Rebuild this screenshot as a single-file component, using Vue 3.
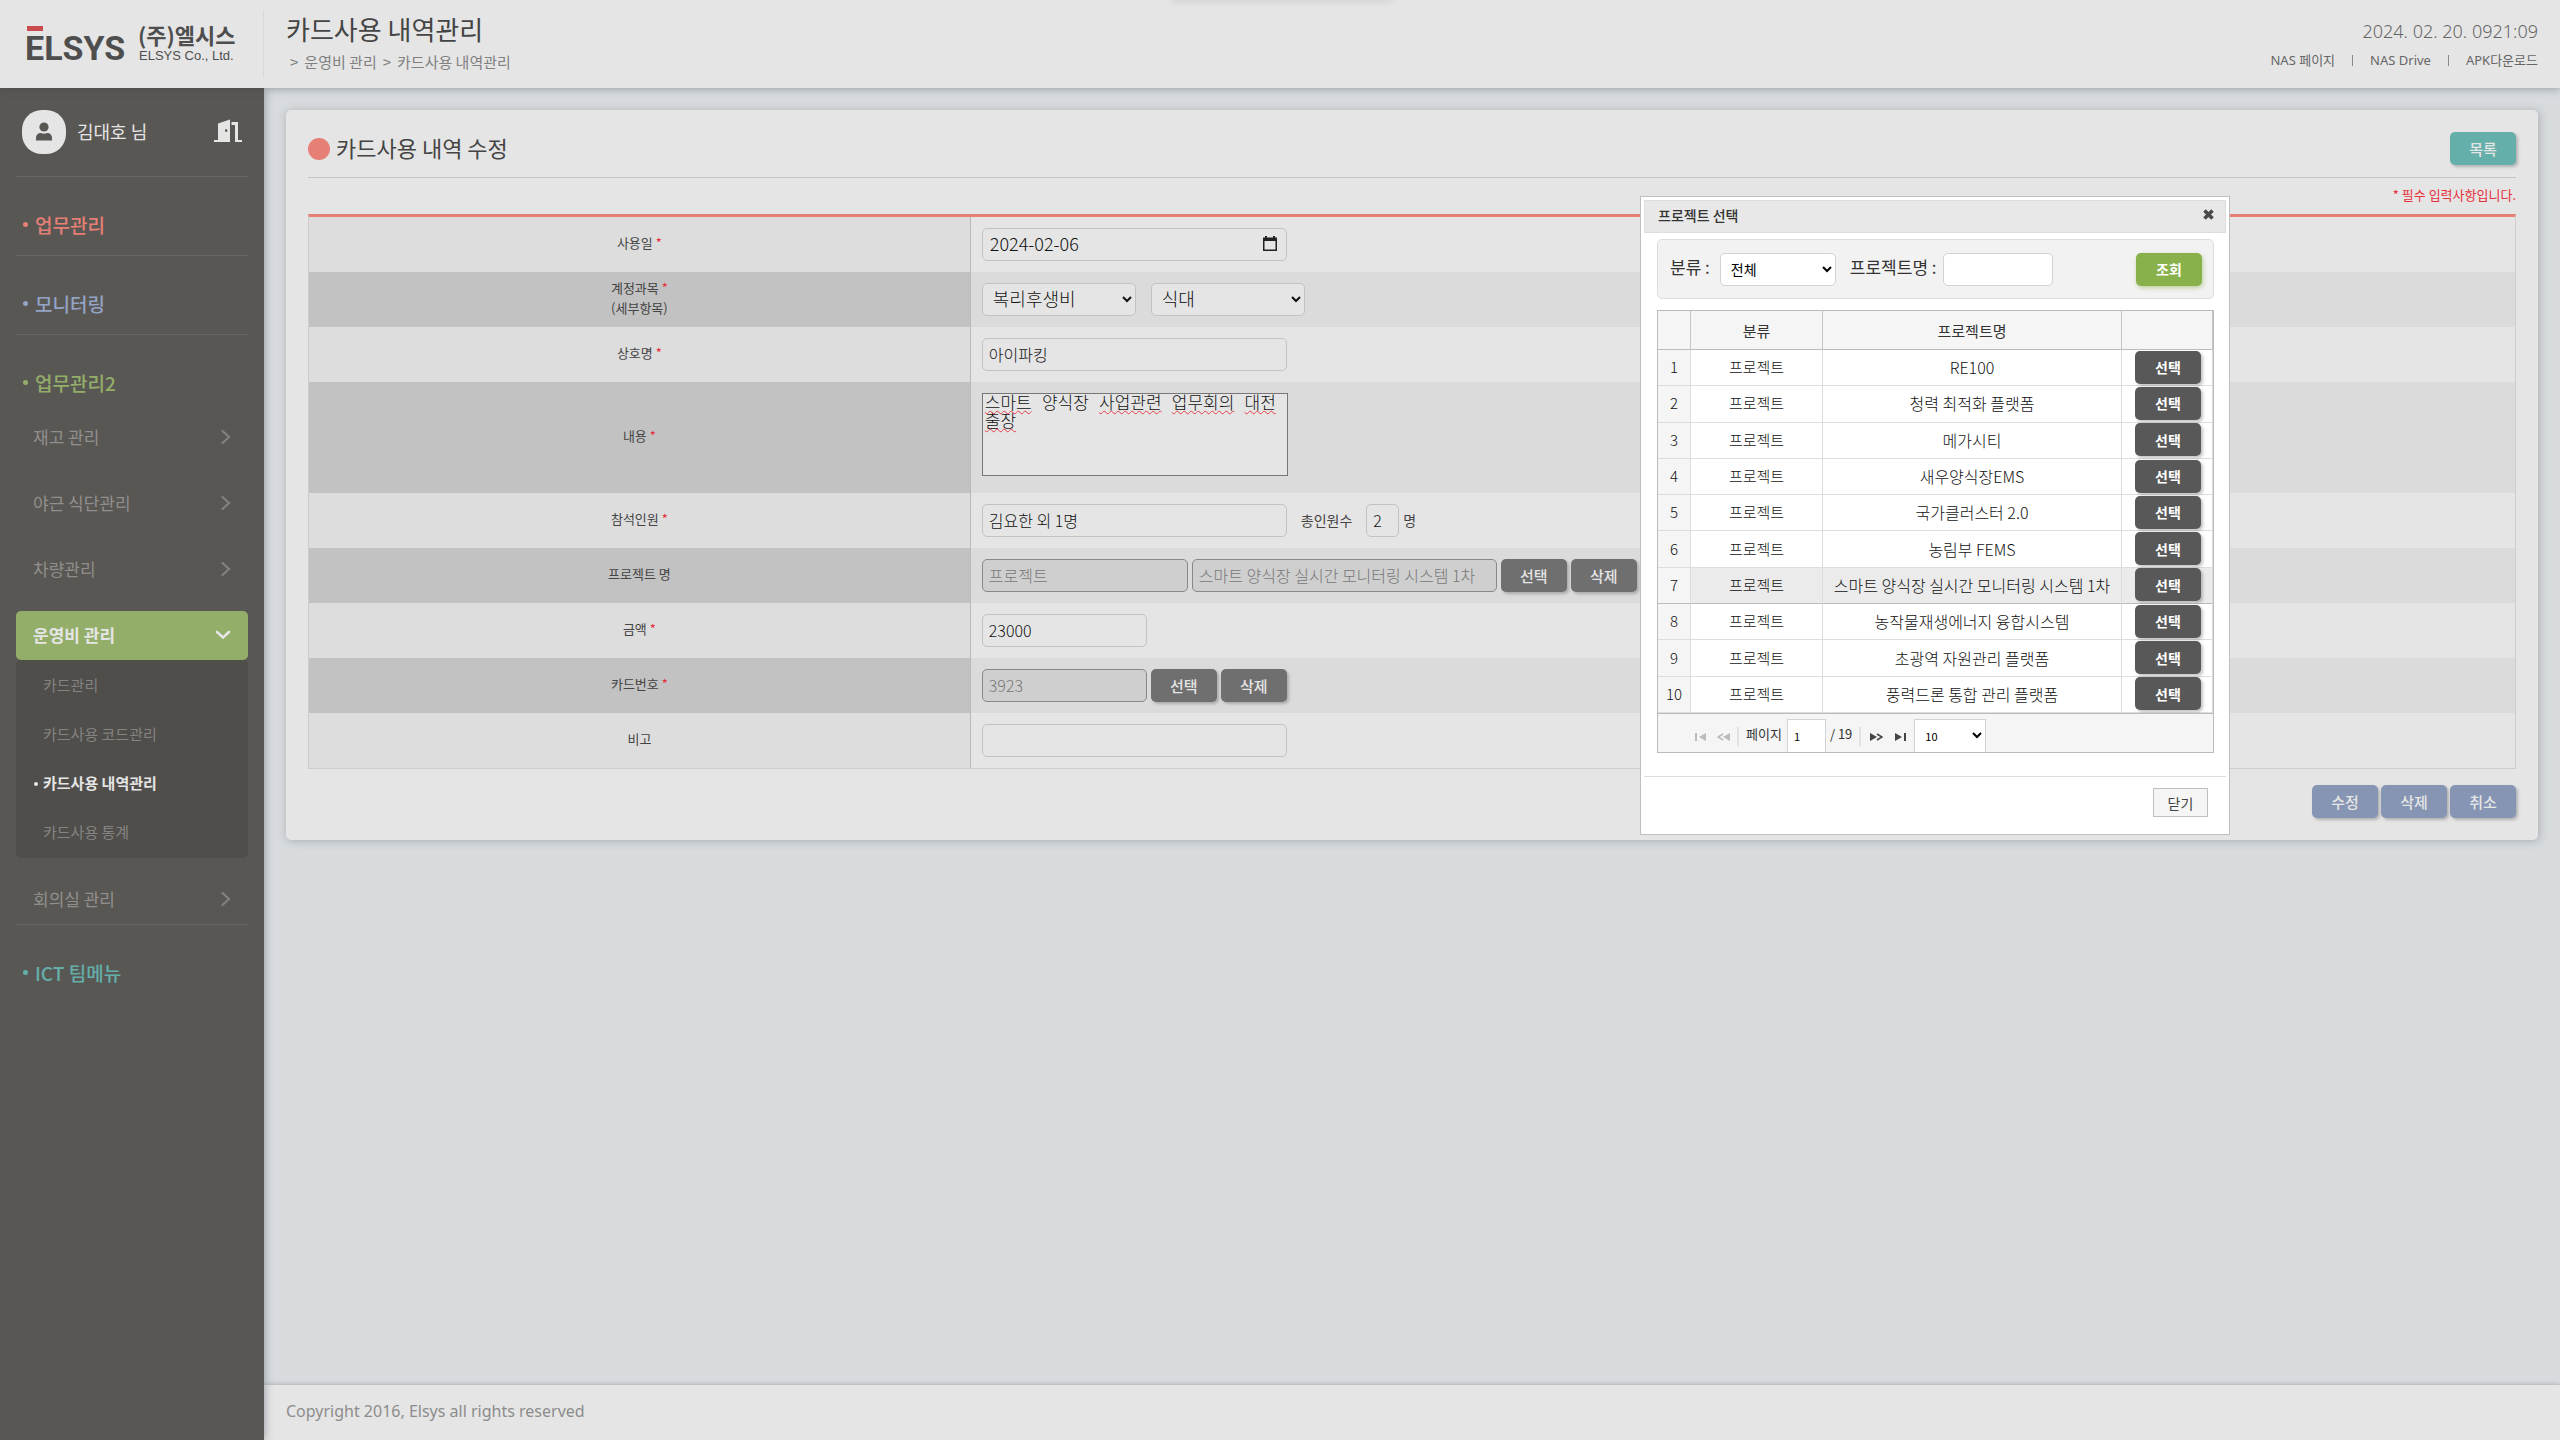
<script setup>
import { ref } from 'vue'

const menu = [
  { label: '재고 관리' },
  { label: '야근 식단관리' },
  { label: '차량관리' },
  { label: '운영비 관리', open: true, children: ['카드관리', '카드사용 코드관리', '카드사용 내역관리', '카드사용 통계'] },
  { label: '회의실 관리' },
]
const currentPage = '카드사용 내역관리'

const memo = ref('스마트 양식장 사업관련 업무회의 대전 출장')
const misspelled = ['스마트', '사업관련', '업무회의', '대전', '출장']

const projects = [
  'RE100',
  '청력 최적화 플랫폼',
  '메가시티',
  '새우양식장EMS',
  '국가클러스터 2.0',
  '농림부 FEMS',
  '스마트 양식장 실시간 모니터링 시스템 1차',
  '농작물재생에너지 융합시스템',
  '초광역 자원관리 플랫폼',
  '풍력드론 통합 관리 플랫폼',
]
const selectedRow = 6
</script>

<template>
  <div class="page">
    <header class="top">
      <div class="brand">
        <svg class="logo" viewBox="0 0 220 44" role="img" aria-label="ELSYS (주)엘시스">
          <rect x="0" y="4" width="16" height="5" fill="#cb4a4e" />
          <text class="logo-name" x="-2" y="38">ELSYS</text>
          <text class="logo-ko" x="111" y="22">(주)엘시스</text>
          <text class="logo-en" x="112" y="38">ELSYS Co., Ltd.</text>
        </svg>
      </div>
      <div class="heading">
        <h1>카드사용 내역관리</h1>
        <nav class="crumbs"><span>&gt;</span><a href="#">운영비 관리</a><span>&gt;</span><a href="#">카드사용 내역관리</a></nav>
      </div>
      <div class="tools">
        <time>2024. 02. 20. 0921:09</time>
        <nav><a href="#">NAS 페이지</a><i></i><a href="#">NAS Drive</a><i></i><a href="#">APK다운로드</a></nav>
      </div>
      <div class="tab-hint"></div>
    </header>

    <div class="body">
      <aside class="side">
        <div class="user">
          <span class="avatar">
            <svg width="18" height="20" viewBox="0 0 18 20"><circle cx="9" cy="5" r="4.6" fill="#595754" /><path d="M1 18.500V16c0-3 2-5 5-5 1 .6 2 .8 3 .8s2-.2 3-.8c3 0 5 2 5 5v2.500z" fill="#595754" /></svg>
          </span>
          <span class="name">김대호 님</span>
          <button class="logout" aria-label="로그아웃">
            <svg width="28" height="24" viewBox="0 0 28 24" fill="#e5e5e5"><path fill-rule="evenodd" d="M0 21h4V4.500L16 .5V23H0zM11 11.500a1.200 1.600 0 1 0 2.400 0 1.200 1.600 0 1 0-2.400 0z" /><path d="M17.500 3H24v18h4v2h-7V6h-3.500z" /></svg>
          </button>
        </div>
        <div class="group red"><h2>업무관리</h2></div>
        <div class="group blue"><h2>모니터링</h2></div>
        <div class="group green">
          <h2>업무관리2</h2>
          <ul class="items">
            <li v-for="m in menu" :key="m.label">
              <a href="#" class="item" :class="{ active: m.open }">
                <span>{{ m.label }}</span>
                <svg v-if="m.open" width="16" height="10" viewBox="0 0 16 10"><path d="M2 2l6 5.500L14 2" fill="none" stroke="#e5e5e5" stroke-width="2.600" stroke-linecap="round" /></svg>
                <svg v-else width="10" height="16" viewBox="0 0 10 16"><path d="M1.500 2L8 8l-6.500 6" fill="none" stroke="#83817f" stroke-width="2.200" stroke-linecap="round" /></svg>
              </a>
              <ul v-if="m.children" class="sub">
                <li v-for="c in m.children" :key="c"><a href="#" :class="{ on: c === currentPage }">{{ c }}</a></li>
              </ul>
            </li>
          </ul>
        </div>
        <div class="group teal last"><h2>ICT 팀메뉴</h2></div>
      </aside>

      <div class="content">
        <main>
          <section class="card">
            <div class="card-head">
              <h2>카드사용 내역 수정</h2>
              <button class="btn teal">목록</button>
            </div>
            <p class="required">* 필수 입력사항입니다.</p>
            <table class="form">
              <colgroup><col class="c-label" /><col /></colgroup>
              <tbody>
                <tr>
                  <th scope="row"><label for="f-date">사용일<em>*</em></label></th>
                  <td><div class="fields"><div class="date">
                    <input id="f-date" class="w-full" value="2024-02-06" />
                    <button aria-label="달력"><svg width="14" height="16" viewBox="0 0 14 16"><path fill="#222" fill-rule="evenodd" d="M2 0h2v1.500h6V0h2v1.500h2V15H0V1.500h2zM1.500 5v8.500h11V5z" /></svg></button>
                  </div></div></td>
                </tr>
                <tr>
                  <th scope="row"><label for="f-acct">계정과목<em>*</em><br />(세부항목)</label></th>
                  <td><div class="fields">
                    <select id="f-acct"><option>복리후생비</option></select>
                    <select class="second" aria-label="세부항목"><option>식대</option></select>
                  </div></td>
                </tr>
                <tr>
                  <th scope="row"><label for="f-shop">상호명<em>*</em></label></th>
                  <td><div class="fields"><input id="f-shop" class="w-long" value="아이파킹" /></div></td>
                </tr>
                <tr>
                  <th scope="row"><label for="f-memo">내용<em>*</em></label></th>
                  <td><div class="memo">
                    <textarea id="f-memo" v-model="memo" spellcheck="false"></textarea>
                    <div class="squiggles" aria-hidden="true"><template v-for="(w, i) in memo.split(' ')" :key="i"><span :class="{ bad: misspelled.includes(w) }">{{ w }}</span>{{ ' ' }}</template></div>
                  </div></td>
                </tr>
                <tr>
                  <th scope="row"><label for="f-people">참석인원<em>*</em></label></th>
                  <td><div class="fields">
                    <input id="f-people" class="w-long" value="김요한 외 1명" />
                    <label class="count-label" for="f-count">총인원수</label>
                    <input id="f-count" class="w-count" value="2" />
                    <span class="unit">명</span>
                  </div></td>
                </tr>
                <tr>
                  <th scope="row"><label for="f-kind">프로젝트 명</label></th>
                  <td><div class="fields">
                    <input id="f-kind" class="w-mid" value="프로젝트" disabled />
                    <input class="w-long" aria-label="프로젝트 이름" value="스마트 양식장 실시간 모니터링 시스템 1차" disabled />
                    <button class="btn gray">선택</button><button class="btn gray">삭제</button>
                  </div></td>
                </tr>
                <tr>
                  <th scope="row"><label for="f-sum">금액<em>*</em></label></th>
                  <td><div class="fields"><input id="f-sum" class="w-short" value="23000" /></div></td>
                </tr>
                <tr>
                  <th scope="row"><label for="f-card">카드번호<em>*</em></label></th>
                  <td><div class="fields">
                    <input id="f-card" class="w-short" value="3923" disabled />
                    <button class="btn gray">선택</button><button class="btn gray">삭제</button>
                  </div></td>
                </tr>
                <tr>
                  <th scope="row"><label for="f-note">비고</label></th>
                  <td><div class="fields"><input id="f-note" class="w-long" value="" /></div></td>
                </tr>
              </tbody>
            </table>
            <div class="actions">
              <button class="btn blue">수정</button><button class="btn blue">삭제</button><button class="btn blue">취소</button>
            </div>
          </section>
        </main>
        <footer>Copyright 2016, Elsys all rights reserved</footer>
      </div>
    </div>

    <div class="dialog" role="dialog" aria-labelledby="dlg-title">
      <div class="dlg-bar">
        <h3 id="dlg-title">프로젝트 선택</h3>
        <button aria-label="닫기"><svg width="11" height="11" viewBox="0 0 11 11"><path d="M1.500 1.500l8 8M9.500 1.500l-8 8" stroke="#4a4a4a" stroke-width="3.600" /></svg></button>
      </div>
      <div class="dlg-body">
        <div class="search">
          <label for="s-kind">분류 :</label>
          <select id="s-kind"><option>전체</option></select>
          <label for="s-name">프로젝트명 :</label>
          <input id="s-name" value="" />
          <button class="btn lime">조회</button>
        </div>
        <div class="grid">
          <table>
            <colgroup><col class="g-no" /><col class="g-kind" /><col /><col class="g-act" /></colgroup>
            <thead><tr><th></th><th>분류</th><th>프로젝트명</th><th></th></tr></thead>
            <tbody>
              <tr v-for="(p, i) in projects" :key="p" :class="{ hover: i === selectedRow }">
                <td class="no">{{ i + 1 }}</td>
                <td>프로젝트</td>
                <td class="title">{{ p }}</td>
                <td class="act"><button class="btn dark">선택</button></td>
              </tr>
            </tbody>
          </table>
          <div class="pager">
            <button class="dim first" aria-label="처음"><svg width="11" height="8" viewBox="0 0 11 8"><path d="M0 0h2v8H0zM11 0v8L4 4z" fill="currentColor" /></svg></button>
            <button class="dim prev" aria-label="이전"><svg width="13" height="8" viewBox="0 0 13 8"><path d="M13 0v8L6 4z" fill="currentColor" /><path d="M6 1L1 4l5 3" fill="none" stroke="currentColor" stroke-width="1.500" /></svg></button>
            <i></i>
            <label for="p-no">페이지</label>
            <input id="p-no" value="1" />
            <span>/ 19</span>
            <i></i>
            <button class="next" aria-label="다음"><svg width="13" height="8" viewBox="0 0 13 8"><path d="M0 0v8l7-4z" fill="currentColor" /><path d="M7 1l5 3-5 3" fill="none" stroke="currentColor" stroke-width="1.500" /></svg></button>
            <button class="end" aria-label="마지막"><svg width="11" height="8" viewBox="0 0 11 8"><path d="M9 0h2v8H9zM0 0v8l7-4z" fill="currentColor" /></svg></button>
            <select aria-label="페이지 크기"><option>10</option></select>
          </div>
        </div>
      </div>
      <div class="dlg-foot"><button>닫기</button></div>
    </div>
  </div>
</template>

<style>
body {
  background: #d7dbde;
}
</style>

<style scoped>
* {
  box-sizing: border-box;
}
.page {
  position: relative;
  min-height: 100vh;
  display: flex;
  flex-direction: column;
  font-family: "Noto Sans CJK KR", "Noto Sans", sans-serif;
  font-size: 16px;
  color: #444;
  background: #d7dbde;
}
h1, h2, h3, p, ul {
  margin: 0;
  padding: 0;
  font-weight: 400;
  list-style: none;
}
a {
  color: inherit;
  text-decoration: none;
}
button, input, select, textarea {
  font-family: inherit;
  margin: 0;
}
button {
  padding: 0;
  border: 0;
  background: none;
  line-height: 1;
}

/* header */
.top {
  position: relative;
  z-index: 2;
  display: flex;
  height: 88px;
  background: #e5e5e5;
  box-shadow: 0 1px 8px rgba(60, 65, 80, 0.4);
}
.brand {
  width: 264px;
  padding: 22px 0 0 27px;
  background: linear-gradient(#d9d9d9, #d9d9d9) 263px 11px / 1px 66px no-repeat;
}
.logo {
  width: 220px;
  height: 44px;
  display: block;
  overflow: visible;
}
.logo-name {
  font: 700 34px "Roboto", sans-serif;
  fill: #4e4e4e;
}
.logo-ko {
  font: 700 22px "Noto Sans CJK KR", sans-serif;
  fill: #4e4e4e;
}
.logo-en {
  font: 400 13px "Liberation Sans", sans-serif;
  fill: #4e4e4e;
}
.heading {
  flex: 1;
  padding: 12px 0 0 22px;
}
.heading h1 {
  font-size: 26px;
  line-height: 34px;
}
.crumbs {
  display: flex;
  gap: 6px;
  padding-left: 4px;
  font-size: 15px;
  line-height: 32px;
  color: #808080;
}
.tools {
  display: flex;
  flex-direction: column;
  align-items: flex-end;
  padding: 18px 22px 0 0;
  color: #666;
  font-family: "Noto Sans", "Noto Sans CJK KR", sans-serif;
}
.tools time {
  font-size: 18px;
  line-height: 26px;
  font-weight: 300;
}
.tools nav {
  display: flex;
  align-items: center;
  gap: 17px;
  font-size: 13px;
  line-height: 32px;
}
.tools i {
  width: 1px;
  height: 11px;
  background: #888;
}
.tab-hint {
  position: absolute;
  top: 0;
  left: calc(50% - 108px);
  width: 220px;
  box-shadow: 0 0 6px 1px rgba(0, 0, 0, 0.2);
}

/* sidebar */
.body {
  flex: 1;
  display: flex;
}
.side {
  width: 264px;
  padding: 0 16px;
  background: #595754;
  box-shadow: 1px 0 8px rgba(60, 65, 80, 0.4);
  z-index: 1;
}
.user {
  display: flex;
  align-items: center;
  height: 89px;
  padding: 0 6px;
  border-bottom: 1px solid #686664;
}
.avatar {
  width: 44px;
  height: 44px;
  display: grid;
  place-items: center;
  border-radius: 20px;
  background: #e5e5e5;
}
.name {
  flex: 1;
  padding: 0 0 2px 11px;
  font-size: 18px;
  color: #e5e5e5;
}
.group {
  padding-top: 20px;
  border-bottom: 1px solid #686664;
}
.group.last {
  border: 0;
}
.group h2 {
  display: flex;
  align-items: center;
  gap: 7px;
  height: 58px;
  padding: 0 0 4px 7px;
  font-size: 19px;
  font-weight: 500;
}
.group h2::before {
  content: "";
  width: 5px;
  height: 5px;
  border-radius: 50%;
  background: currentColor;
}
.red h2 { color: #e67f76; }
.blue h2 { color: #94a4c6; }
.green h2 { color: #93ae69; }
.teal h2 { color: #64afaa; }
.items {
  display: flex;
  flex-direction: column;
  gap: 17px;
}
.item {
  display: flex;
  align-items: center;
  justify-content: space-between;
  height: 49px;
  padding: 0 17px 2px;
  border-radius: 5px;
  font-size: 17px;
  color: #918f8d;
}
.item.active {
  background: #93ae69;
  color: #e5e5e5;
  font-weight: 700;
}
.sub {
  height: 198px;
  border-radius: 5px;
  background: #4f4e4b;
}
.sub a {
  position: relative;
  display: block;
  padding-left: 27px;
  font-size: 15px;
  line-height: 49px;
  color: #858381;
}
.sub a.on {
  color: #e5e5e5;
  font-weight: 700;
}
.sub a.on::before {
  content: "";
  position: absolute;
  left: 18px;
  top: 24px;
  width: 4px;
  height: 4px;
  border-radius: 50%;
  background: currentColor;
}

/* content */
.content {
  flex: 1;
  min-width: 0;
  display: flex;
  flex-direction: column;
}
main {
  flex: 1;
  padding: 22px;
}
.card {
  padding: 22px;
  border-radius: 5px;
  background: #e5e5e5;
  box-shadow: 1px 1px 8px rgba(60, 65, 80, 0.3);
}
.card-head {
  display: flex;
  align-items: flex-start;
  justify-content: space-between;
  height: 46px;
  border-bottom: 1px solid #c4c4c4;
}
.card-head h2 {
  display: flex;
  align-items: flex-start;
  gap: 6px;
  font-size: 22px;
  line-height: 31px;
}
.card-head h2::before {
  content: "";
  width: 22px;
  height: 22px;
  margin-top: 6px;
  border-radius: 50%;
  background: #e67f76;
}
.required {
  height: 36px;
  font-size: 13px;
  line-height: 34px;
  text-align: right;
  color: #e5303a;
}
.btn {
  width: 66px;
  height: 33px;
  flex: none;
  border-radius: 5px;
  font-size: 15px;
  font-weight: 500;
  color: #e5e5e5;
  box-shadow: 2px 2px 3px rgba(60, 60, 60, 0.3);
}
.btn.teal { background: #64afaa; }
.btn.blue { background: #8695b3; }
.btn.gray { background: #6f6f6f; }
.btn.dark { background: #585858; }
.btn.lime { background: #89b14b; }
.form {
  width: 100%;
  border-collapse: separate;
  border-spacing: 0;
  table-layout: fixed;
  border: 1px solid #cdcdcd;
  border-top: 3px solid #e67f76;
}
.c-label {
  width: 30%;
}
.form th, .form td {
  height: 55px;
  padding: 0;
}
.form th {
  padding-bottom: 4px;
  border-right: 1px solid #b9b9b9;
  background: #ddd;
  font-size: 13px;
  line-height: 20px;
  font-weight: 400;
}
.form tr:nth-child(even) th { background: #c2c2c2; }
.form tr:nth-child(even) td { background: #dbdbdb; }
.form td {
  padding-left: 11px;
}
.form em {
  margin-left: 3px;
  font-style: normal;
  color: #e5303a;
}
.fields {
  display: flex;
  align-items: center;
  gap: 4px;
}
.fields input, .fields select {
  height: 33px;
  padding: 0 6px 2px;
  border: 1px solid #c2c2c8;
  border-radius: 5px;
  background: #e5e5e5;
  font-size: 16px;
  font-weight: 300;
  color: #111;
}
.fields select {
  width: 154px;
  padding-bottom: 4px;
  font-size: 18px;
}
.fields .second {
  margin-left: 11px;
}
.fields input:disabled {
  border-color: #888;
  background: #cfcfcf;
  color: #777;
}
.fields .w-long, .date { width: 305px; }
.fields .w-mid { width: 206px; }
.fields .w-short { width: 165px; }
.fields .w-count { width: 33px; }
.fields .w-full {
  width: 100%;
  padding: 0 7px 4px;
  font-size: 18px;
}
.date {
  position: relative;
}
.date button {
  position: absolute;
  right: 10px;
  top: 8px;
}
.count-label {
  padding: 0 10px 2px 10px;
  font-size: 14px;
}
.unit {
  padding-bottom: 2px;
  font-size: 14px;
}
.memo {
  position: relative;
  width: 306px;
  height: 111px;
  padding-top: 11px;
}
.memo textarea, .squiggles {
  display: block;
  width: 306px;
  height: 83px;
  padding: 2px;
  border: 1px solid #777;
  font: 300 17px/18px "Liberation Mono", "Noto Sans CJK KR", monospace;
  color: #111;
  background: #e5e5e5;
  resize: none;
  white-space: pre-wrap;
}
.memo .squiggles {
  position: absolute;
  top: 11px;
  left: 0;
  border-color: transparent;
  background: none;
  color: transparent;
  pointer-events: none;
}
.bad {
  text-decoration: underline wavy #e5404a 1px;
}
.actions {
  display: flex;
  justify-content: flex-end;
  gap: 3px;
  padding-top: 16px;
}
footer {
  height: 55px;
  padding-left: 22px;
  background: #e5e5e5;
  box-shadow: 0 -1px 4px rgba(60, 65, 80, 0.25);
  font: 16px/52px "Noto Sans", sans-serif;
  color: #8c8c8c;
}

/* project dialog */
.dialog {
  position: absolute;
  z-index: 3;
  top: 196px;
  right: 330px;
  width: 590px;
  padding: 3px;
  border: 1px solid #bfbfbf;
  background: #fff;
  color: #333;
}
.dlg-bar {
  display: flex;
  align-items: center;
  justify-content: space-between;
  height: 33px;
  padding: 0 11px 3px 13px;
  border: 1px solid #ddd;
  background: #e8e8e8;
}
.dlg-bar h3 {
  font-size: 14px;
  font-weight: 500;
}
.dlg-body {
  padding: 6px 12px 23px 13px;
}
.search {
  display: flex;
  align-items: center;
  height: 60px;
  padding: 0 11px 0 12px;
  border: 1px solid #ddd;
  border-radius: 5px;
  background: #f2f2f2;
}
.search label {
  padding-bottom: 6px;
  font-size: 17px;
}
.search select, .search input {
  height: 33px;
  border: 1px solid #ced4da;
  border-radius: 5px;
  background: #fff;
}
.search select {
  width: 116px;
  margin: 0 14px 0 10px;
  padding: 0 6px;
  font-size: 14px;
}
.search input {
  width: 110px;
  margin-left: 6px;
}
.search .btn {
  margin-left: auto;
  font-size: 14px;
  font-weight: 700;
  color: #fff;
  box-shadow: 1px 2px 4px rgba(137, 177, 75, 0.5);
}
.grid {
  margin-top: 11px;
  border: 1px solid #bbb;
}
.grid table {
  width: 100%;
  height: 402px;
  border-collapse: separate;
  border-spacing: 0;
  table-layout: fixed;
  text-align: center;
}
.g-no { width: 33px; }
.g-kind { width: 132px; }
.g-act { width: 91px; }
.grid th {
  height: 39px;
  padding: 0;
  border-right: 1px solid #c5c5c5;
  border-bottom: 1px solid #bbb;
  background: #f5f5f5;
  font-size: 15px;
  font-weight: 400;
}
.grid td {
  height: 36px;
  padding: 0 0 1px;
  border-right: 1px solid #ddd;
  border-bottom: 1px solid #ddd;
  font-size: 15px;
  line-height: 20px;
  font-weight: 300;
  color: #111;
  white-space: nowrap;
}
.grid .title {
  font-size: 16px;
}
.grid .no { background: #f5f5f5; }
.grid .hover td {
  background: #ebebeb;
  border-bottom-color: #bbb;
}
.grid .hover .no { background: #f5f5f5; }
.act .btn {
  display: block;
  margin: 0 auto 0 13px;
  font-size: 14px;
  font-weight: 700;
  color: #fff;
}
.pager {
  display: flex;
  align-items: flex-end;
  height: 39px;
  padding-left: 37px;
  border-top: 1px solid #bbb;
  background: #f5f5f5;
  font-size: 13px;
  line-height: 20px;
}
.pager button {
  height: 20px;
  margin-bottom: 6px;
  color: #444;
}
.pager .dim { color: #bbb; }
.pager .prev { margin-left: 11px; }
.pager .next { margin-left: 9px; }
.pager .end { margin: 0 8px 6px 12px; }
.pager i {
  width: 2px;
  height: 19px;
  margin: 0 0 6px 7px;
  background: #e2e2e2;
}
.pager label {
  margin: 0 5px 8px 7px;
}
.pager span {
  margin: 0 0 8px 4px;
}
.pager input, .pager select {
  height: 33px;
  border: 1px solid #ced4da;
  border-bottom: 0;
  background: #fff;
  font-size: 11px;
  padding: 0 6px;
}
.pager input { width: 39px; }
.pager select { width: 72px; }
.dlg-foot {
  display: flex;
  justify-content: flex-end;
  height: 55px;
  padding: 11px 18px 0 0;
  border-top: 1px solid #ddd;
}
.dlg-foot button {
  width: 55px;
  height: 29px;
  border: 1px solid #bfbfbf;
  background: #f5f5f5;
  font-size: 14px;
  color: #444;
}
</style>
